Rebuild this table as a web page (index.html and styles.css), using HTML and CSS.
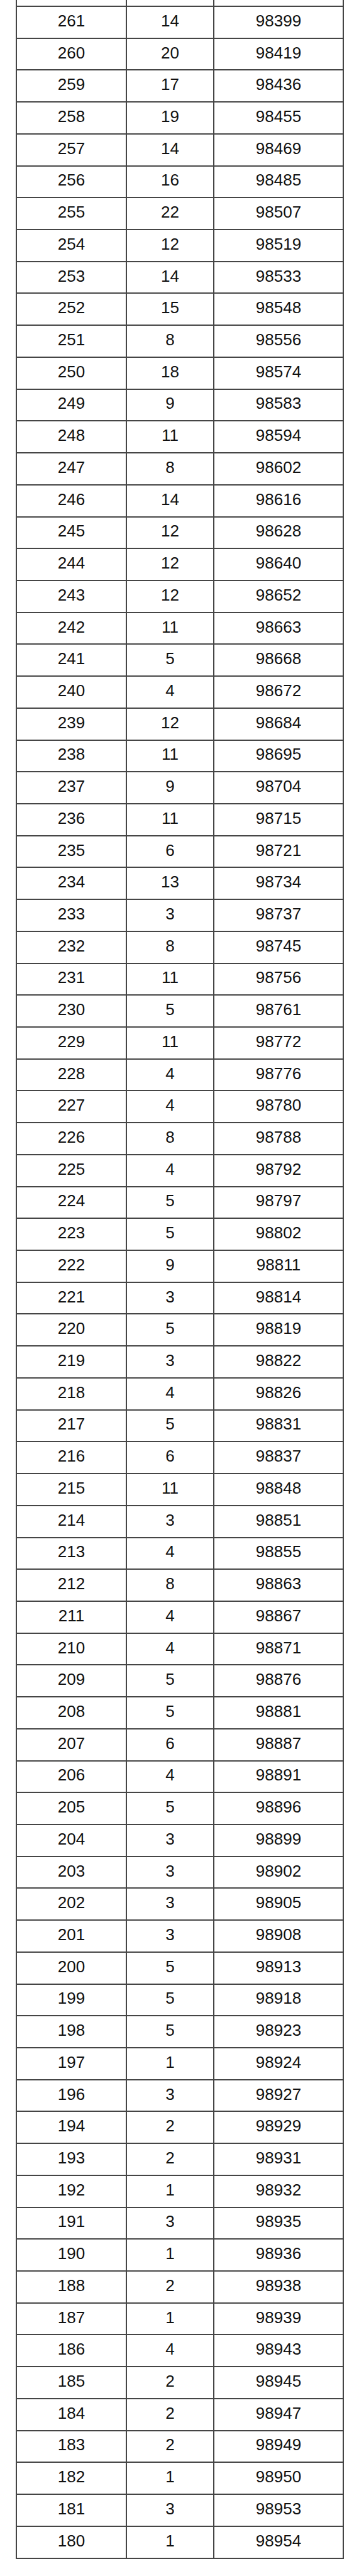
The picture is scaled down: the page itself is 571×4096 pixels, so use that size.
FILE: index.html
```html
<!DOCTYPE html>
<html lang="zh">
<head>
<meta charset="utf-8">
<title>分数段表</title>
<link rel="stylesheet" href="styles.css">
</head>
<body>
<table class="sheet">
<colgroup><col class="c1"><col class="c2"><col class="c3"></colgroup>
<tbody>
<tr class="stub"><td></td><td></td><td></td></tr>
<tr><td>261</td><td>14</td><td>98399</td></tr>
<tr><td>260</td><td>20</td><td>98419</td></tr>
<tr><td>259</td><td>17</td><td>98436</td></tr>
<tr><td>258</td><td>19</td><td>98455</td></tr>
<tr><td>257</td><td>14</td><td>98469</td></tr>
<tr><td>256</td><td>16</td><td>98485</td></tr>
<tr><td>255</td><td>22</td><td>98507</td></tr>
<tr><td>254</td><td>12</td><td>98519</td></tr>
<tr><td>253</td><td>14</td><td>98533</td></tr>
<tr><td>252</td><td>15</td><td>98548</td></tr>
<tr><td>251</td><td>8</td><td>98556</td></tr>
<tr><td>250</td><td>18</td><td>98574</td></tr>
<tr><td>249</td><td>9</td><td>98583</td></tr>
<tr><td>248</td><td>11</td><td>98594</td></tr>
<tr><td>247</td><td>8</td><td>98602</td></tr>
<tr><td>246</td><td>14</td><td>98616</td></tr>
<tr><td>245</td><td>12</td><td>98628</td></tr>
<tr><td>244</td><td>12</td><td>98640</td></tr>
<tr><td>243</td><td>12</td><td>98652</td></tr>
<tr><td>242</td><td>11</td><td>98663</td></tr>
<tr><td>241</td><td>5</td><td>98668</td></tr>
<tr><td>240</td><td>4</td><td>98672</td></tr>
<tr><td>239</td><td>12</td><td>98684</td></tr>
<tr><td>238</td><td>11</td><td>98695</td></tr>
<tr><td>237</td><td>9</td><td>98704</td></tr>
<tr><td>236</td><td>11</td><td>98715</td></tr>
<tr><td>235</td><td>6</td><td>98721</td></tr>
<tr><td>234</td><td>13</td><td>98734</td></tr>
<tr><td>233</td><td>3</td><td>98737</td></tr>
<tr><td>232</td><td>8</td><td>98745</td></tr>
<tr><td>231</td><td>11</td><td>98756</td></tr>
<tr><td>230</td><td>5</td><td>98761</td></tr>
<tr><td>229</td><td>11</td><td>98772</td></tr>
<tr><td>228</td><td>4</td><td>98776</td></tr>
<tr><td>227</td><td>4</td><td>98780</td></tr>
<tr><td>226</td><td>8</td><td>98788</td></tr>
<tr><td>225</td><td>4</td><td>98792</td></tr>
<tr><td>224</td><td>5</td><td>98797</td></tr>
<tr><td>223</td><td>5</td><td>98802</td></tr>
<tr><td>222</td><td>9</td><td>98811</td></tr>
<tr><td>221</td><td>3</td><td>98814</td></tr>
<tr><td>220</td><td>5</td><td>98819</td></tr>
<tr><td>219</td><td>3</td><td>98822</td></tr>
<tr><td>218</td><td>4</td><td>98826</td></tr>
<tr><td>217</td><td>5</td><td>98831</td></tr>
<tr><td>216</td><td>6</td><td>98837</td></tr>
<tr><td>215</td><td>11</td><td>98848</td></tr>
<tr><td>214</td><td>3</td><td>98851</td></tr>
<tr><td>213</td><td>4</td><td>98855</td></tr>
<tr><td>212</td><td>8</td><td>98863</td></tr>
<tr><td>211</td><td>4</td><td>98867</td></tr>
<tr><td>210</td><td>4</td><td>98871</td></tr>
<tr><td>209</td><td>5</td><td>98876</td></tr>
<tr><td>208</td><td>5</td><td>98881</td></tr>
<tr><td>207</td><td>6</td><td>98887</td></tr>
<tr><td>206</td><td>4</td><td>98891</td></tr>
<tr><td>205</td><td>5</td><td>98896</td></tr>
<tr><td>204</td><td>3</td><td>98899</td></tr>
<tr><td>203</td><td>3</td><td>98902</td></tr>
<tr><td>202</td><td>3</td><td>98905</td></tr>
<tr><td>201</td><td>3</td><td>98908</td></tr>
<tr><td>200</td><td>5</td><td>98913</td></tr>
<tr><td>199</td><td>5</td><td>98918</td></tr>
<tr><td>198</td><td>5</td><td>98923</td></tr>
<tr><td>197</td><td>1</td><td>98924</td></tr>
<tr><td>196</td><td>3</td><td>98927</td></tr>
<tr><td>194</td><td>2</td><td>98929</td></tr>
<tr><td>193</td><td>2</td><td>98931</td></tr>
<tr><td>192</td><td>1</td><td>98932</td></tr>
<tr><td>191</td><td>3</td><td>98935</td></tr>
<tr><td>190</td><td>1</td><td>98936</td></tr>
<tr><td>188</td><td>2</td><td>98938</td></tr>
<tr><td>187</td><td>1</td><td>98939</td></tr>
<tr><td>186</td><td>4</td><td>98943</td></tr>
<tr><td>185</td><td>2</td><td>98945</td></tr>
<tr><td>184</td><td>2</td><td>98947</td></tr>
<tr><td>183</td><td>2</td><td>98949</td></tr>
<tr><td>182</td><td>1</td><td>98950</td></tr>
<tr><td>181</td><td>3</td><td>98953</td></tr>
<tr><td>180</td><td>1</td><td>98954</td></tr>
</tbody>
</table>
</body>
</html>
```

FILE: styles.css
```css
html, body {
  margin: 0;
  padding: 0;
  background: #fff;
}

.sheet {
  border-collapse: collapse;
  table-layout: fixed;
  width: 520px;
  margin: 0 0 0 25px;
  font-family: "Liberation Sans", Arial, sans-serif;
  font-size: 26px;
  color: #111;
}

.sheet .c1 { width: 175px; }
.sheet .c2 { width: 139px; }
.sheet .c3 { width: 206px; }

.sheet tr {
  height: 50.73px;
}

.sheet td {
  border: 2px solid #454545;
  text-align: center;
  vertical-align: middle;
  padding: 0 0 5px;
  line-height: 1;
}

.sheet tr.stub {
  height: 10px;
}

.sheet tr.stub td {
  border-top: none;
  padding: 0;
}
```
